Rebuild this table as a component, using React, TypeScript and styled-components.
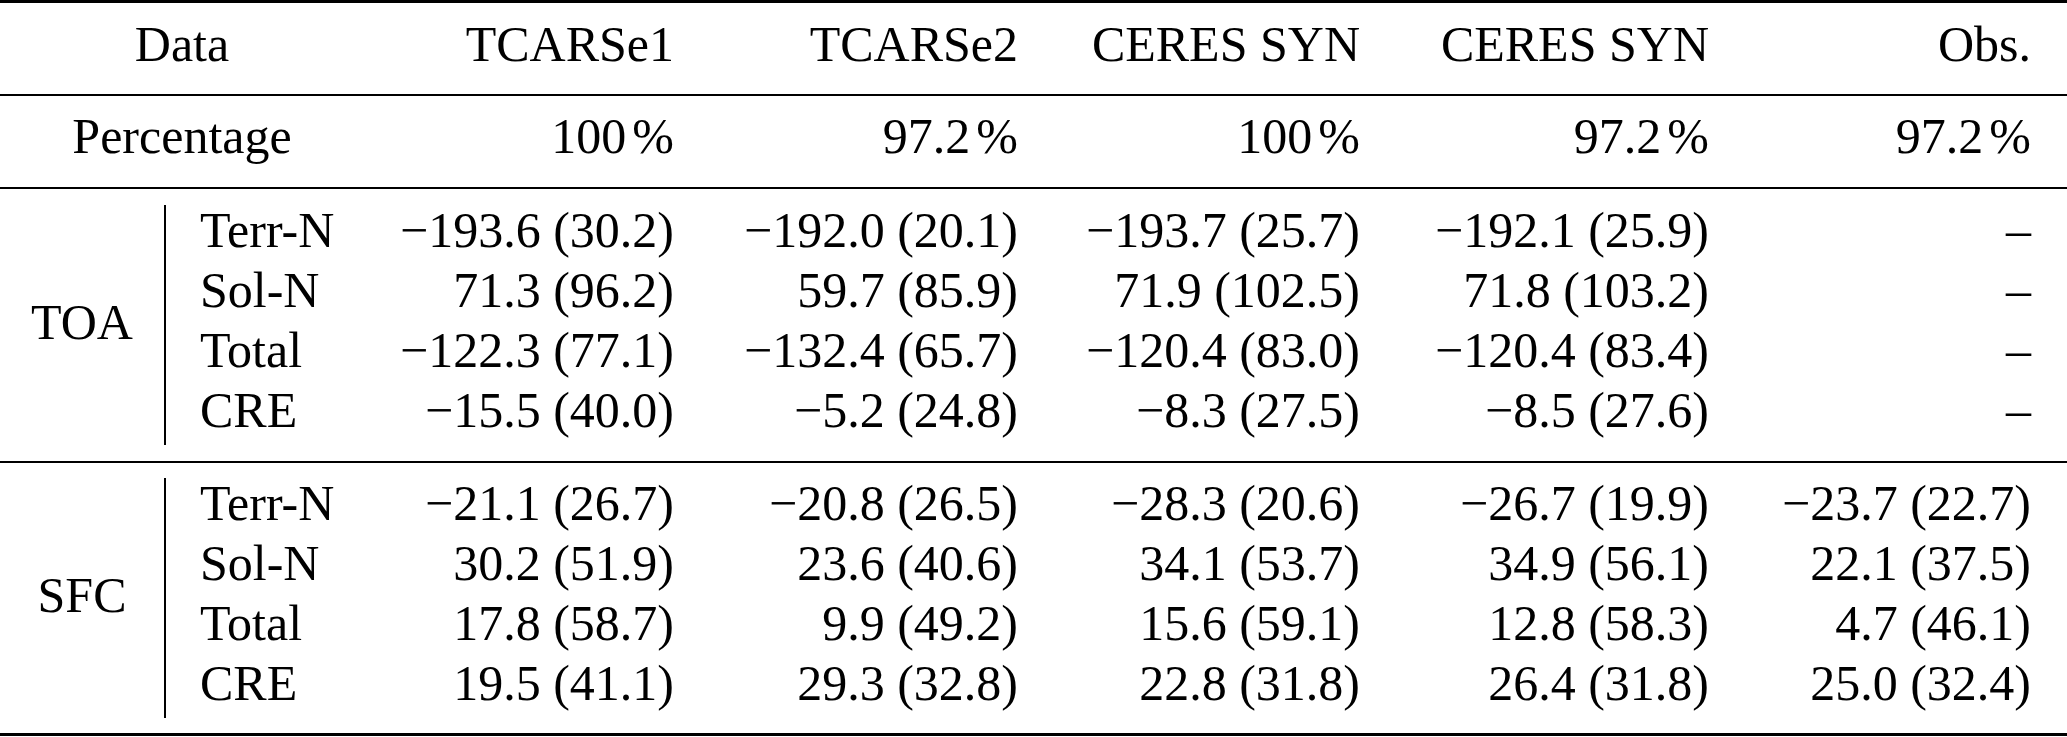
import React from 'react';
import { createGlobalStyle, styled } from 'styled-components';

const GlobalStyle = createGlobalStyle`
  html, body {
    margin: 0;
    padding: 0;
    background: #fff;
  }
`;

const TableWrapper = styled.div`
  width: 2067px;
  font-family: 'Liberation Serif', 'Times New Roman', serif;
  font-size: 50px;
  color: #000;
`;

const Rule = styled.div<{ $heavy?: boolean }>`
  height: ${(p) => (p.$heavy ? 3 : 2)}px;
  background: #000;
`;

const Section = styled.div<{ $padTop: number; $padBottom: number }>`
  display: grid;
  grid-template-columns: 164px 200px 310px 344px 342px 349px 322px;
  padding: ${(p) => p.$padTop}px 36px ${(p) => p.$padBottom}px 0;
  line-height: 50px;
`;

const SpanCell = styled.div`
  grid-column: 1 / span 2;
  text-align: center;
`;

const ValueCell = styled.div<{ $row?: boolean }>`
  text-align: right;
  white-space: nowrap;
  padding-bottom: ${(p) => (p.$row ? 10 : 0)}px;
`;

const GroupLabel = styled.div`
  grid-column: 1;
  grid-row: 1 / span 4;
  align-self: center;
  text-align: center;
  padding-bottom: 6px;
`;

const RowLabel = styled.div`
  grid-column: 2;
  border-left: 2px solid #000;
  padding-left: 34px;
  padding-bottom: 10px;
  white-space: nowrap;
`;

const Unit = styled.span`
  margin-left: 6px;
`;

const columns = ['TCARSe1', 'TCARSe2', 'CERES SYN', 'CERES SYN', 'Obs.'];
const percentages = ['100', '97.2', '100', '97.2', '97.2'];

const groups = [
  {
    name: 'TOA',
    padTop: 16,
    padBottom: 16,
    rows: [
      ['Terr-N', '−193.6 (30.2)', '−192.0 (20.1)', '−193.7 (25.7)', '−192.1 (25.9)', '–'],
      ['Sol-N', '71.3 (96.2)', '59.7 (85.9)', '71.9 (102.5)', '71.8 (103.2)', '–'],
      ['Total', '−122.3 (77.1)', '−132.4 (65.7)', '−120.4 (83.0)', '−120.4 (83.4)', '–'],
      ['CRE', '−15.5 (40.0)', '−5.2 (24.8)', '−8.3 (27.5)', '−8.5 (27.6)', '–'],
    ],
  },
  {
    name: 'SFC',
    padTop: 15,
    padBottom: 15,
    rows: [
      ['Terr-N', '−21.1 (26.7)', '−20.8 (26.5)', '−28.3 (20.6)', '−26.7 (19.9)', '−23.7 (22.7)'],
      ['Sol-N', '30.2 (51.9)', '23.6 (40.6)', '34.1 (53.7)', '34.9 (56.1)', '22.1 (37.5)'],
      ['Total', '17.8 (58.7)', '9.9 (49.2)', '15.6 (59.1)', '12.8 (58.3)', '4.7 (46.1)'],
      ['CRE', '19.5 (41.1)', '29.3 (32.8)', '22.8 (31.8)', '26.4 (31.8)', '25.0 (32.4)'],
    ],
  },
];

function App() {
  return (
    <>
      <GlobalStyle />
      <TableWrapper>
        <Rule $heavy />
        <Section $padTop={16} $padBottom={25}>
          <SpanCell>Data</SpanCell>
          {columns.map((col, i) => (
            <ValueCell key={i}>{col}</ValueCell>
          ))}
        </Section>
        <Rule />
        <Section $padTop={15} $padBottom={26}>
          <SpanCell>Percentage</SpanCell>
          {percentages.map((val, i) => (
            <ValueCell key={i}>
              {val}
              <Unit>%</Unit>
            </ValueCell>
          ))}
        </Section>
        {groups.map((group) => (
          <React.Fragment key={group.name}>
            <Rule />
            <Section $padTop={group.padTop} $padBottom={group.padBottom}>
              <GroupLabel>{group.name}</GroupLabel>
              {group.rows.map((row) => (
                <React.Fragment key={row[0]}>
                  <RowLabel>{row[0]}</RowLabel>
                  {row.slice(1).map((val, i) => (
                    <ValueCell key={i} $row>
                      {val}
                    </ValueCell>
                  ))}
                </React.Fragment>
              ))}
            </Section>
          </React.Fragment>
        ))}
        <Rule $heavy />
      </TableWrapper>
    </>
  );
}

export default App;
